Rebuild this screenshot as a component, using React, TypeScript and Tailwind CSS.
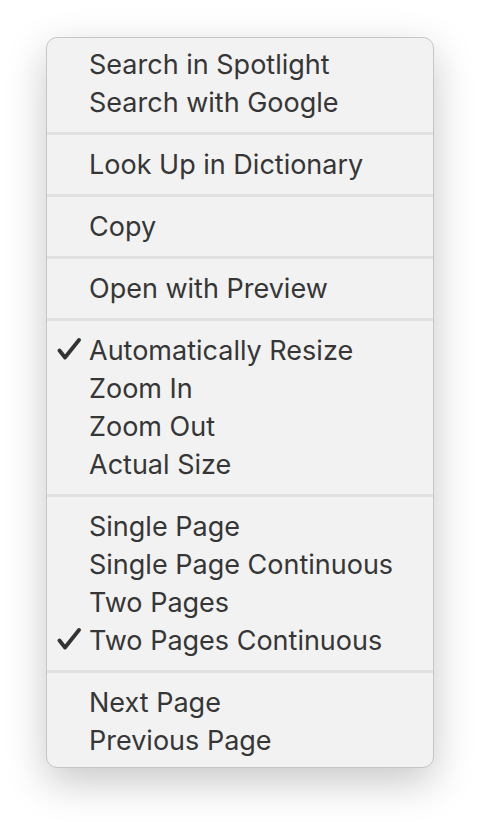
import React from "react";

type Item = { label: string; checked?: boolean };

const groups: Item[][] = [
  [{ label: "Search in Spotlight" }, { label: "Search with Google" }],
  [{ label: "Look Up in Dictionary" }],
  [{ label: "Copy" }],
  [{ label: "Open with Preview" }],
  [
    { label: "Automatically Resize", checked: true },
    { label: "Zoom In" },
    { label: "Zoom Out" },
    { label: "Actual Size" },
  ],
  [
    { label: "Single Page" },
    { label: "Single Page Continuous" },
    { label: "Two Pages" },
    { label: "Two Pages Continuous", checked: true },
  ],
  [{ label: "Next Page" }, { label: "Previous Page" }],
];

function Check() {
  return (
    <svg width="24" height="22" viewBox="0 0 24 22" className="absolute left-[10px] top-[7px]">
      <path
        d="M2.5 12.5 L8 19.5 L22 2"
        fill="none"
        stroke="#333333"
        strokeWidth="3.8"
        strokeLinecap="round"
        strokeLinejoin="round"
      />
    </svg>
  );
}

export default function App() {
  return (
    <div className="min-h-[822px] w-[480px] bg-white pt-[37px] pl-[46px]">
      <div
        className="w-[388px] rounded-[11px] border border-[#c6c6c6] bg-[#f2f2f2] pt-[7px] pb-[8px] shadow-[0_14px_40px_rgba(0,0,0,0.22)]"
        style={{ fontFamily: "Inter, 'Liberation Sans', sans-serif" }}
      >
        {groups.map((g, gi) => (
          <div key={gi}>
            {gi > 0 && (
              <div className="flex h-[24px] items-center">
                <div className="h-[3px] w-full bg-[#e1e1e1]" />
              </div>
            )}
            {g.map((it) => (
              <div
                key={it.label}
                className="relative flex h-[38px] items-center pl-[42px] text-[27px] leading-none text-[#363636]"
              >
                {it.checked && <Check />}
                {it.label}
              </div>
            ))}
          </div>
        ))}
      </div>
    </div>
  );
}
